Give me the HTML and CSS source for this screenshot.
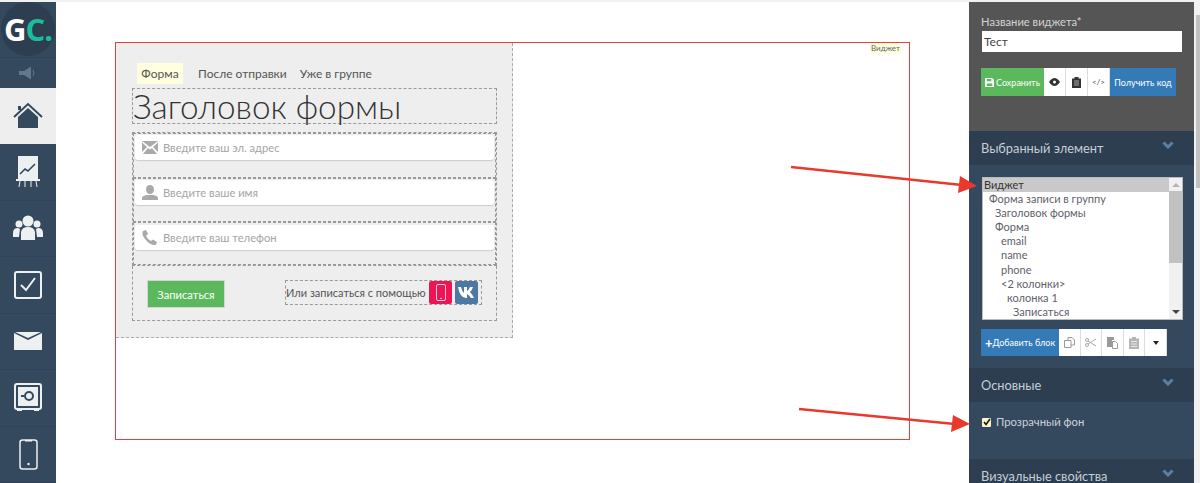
FILE: index.html
```html
<!DOCTYPE html>
<html lang="ru">
<head>
<meta charset="utf-8">
<title>Виджет</title>
<link rel="stylesheet" href="styles.css">
</head>
<body>
<div class="app">
  <nav class="nav">
    <div class="logo-row"><div class="logo"><span class="logo-g">G</span><span class="logo-c">C.</span></div></div>
    <div class="nav-speaker">
      <svg width="20" height="14" viewBox="0 0 20 14"><path d="M1 5h5l7-4.500v13L6 9H1z" fill="#62768c"/><path d="M15 4q2 3 0 6" stroke="#62768c" fill="none"/></svg>
    </div>
    <div class="nav-item nav-active">
      <svg width="30" height="28" viewBox="0 0 30 28"><path d="M1 15 15 2l14 13" fill="none" stroke="#34495e" stroke-width="2"/><path d="M5 15 15 6l10 9v11H5z" fill="#34495e"/><path d="M5 4h3v4H5z" fill="#34495e"/></svg>
    </div>
    <div class="nav-item">
      <svg width="24" height="33" viewBox="0 0 24 33"><path d="M2 1h20v23H2z" fill="#ecf0f1"/><path d="M4 19l5-5 3 2 7-7" stroke="#34495e" stroke-width="1.600" fill="none"/><path d="M0 24h24v2H0z" fill="#ecf0f1"/><path d="M4 26l-1 6M9 26v6M15 26v6M20 26l1 6" stroke="#ecf0f1"/></svg>
    </div>
    <div class="nav-item">
      <svg width="30" height="26" viewBox="0 0 30 26"><circle cx="15" cy="6" r="5.500" fill="#ecf0f1"/><circle cx="6" cy="9" r="3.500" fill="#ecf0f1"/><circle cx="24" cy="9" r="3.500" fill="#ecf0f1"/><path d="M8 25v-8q1-5 7-5t7 5v8z" fill="#ecf0f1"/><path d="M0 22v-4q0-5 5-5l2 1-1 8zM30 22v-4q0-5-5-5l-2 1 1 8z" fill="#ecf0f1"/></svg>
    </div>
    <div class="nav-item">
      <svg width="28" height="28" viewBox="0 0 28 28"><rect x="1" y="1" width="26" height="26" rx="2" fill="none" stroke="#ecf0f1" stroke-width="2"/><path d="M7 14l5 5 9-12" fill="none" stroke="#ecf0f1" stroke-width="2"/></svg>
    </div>
    <div class="nav-item">
      <svg width="28" height="18" viewBox="0 0 28 18"><path d="M0 1l14 7 14-7v17H0z" fill="#ecf0f1"/><path d="M1 0h26L14 6z" fill="#ecf0f1"/></svg>
    </div>
    <div class="nav-item">
      <svg width="28" height="29" viewBox="0 0 28 29"><rect x="1" y="1" width="26" height="25" rx="2" fill="none" stroke="#ecf0f1" stroke-width="2"/><rect x="4" y="4" width="20" height="19" fill="#ecf0f1"/><circle cx="15" cy="13" r="4" fill="none" stroke="#34495e" stroke-width="2"/><path d="M7 13h3" stroke="#34495e" stroke-width="2"/><path d="M3 26h5v2H3zM20 26h5v2h-5z" fill="#ecf0f1"/></svg>
    </div>
    <div class="nav-item">
      <svg width="19" height="31" viewBox="0 0 19 31"><rect x="1" y="1" width="17" height="29" rx="2.500" fill="none" stroke="#ecf0f1" stroke-width="1.500"/><path d="M6 1h7v1.500H6z" fill="#ecf0f1"/><circle cx="9.500" cy="25" r="1.200" fill="#ecf0f1"/></svg>
    </div>
  </nav>

  <main class="canvas">
    <section class="widget">
      <span class="widget-label">Виджет</span>
      <div class="form-card">
        <div class="tabs">
          <span class="tab tab-active">Форма</span>
          <span class="tab">После отправки</span>
          <span class="tab">Уже в группе</span>
        </div>
        <h1 class="form-title">Заголовок формы</h1>
        <div class="form-fields">
          <div class="field">
            <div class="input">
              <svg class="input-icon" width="16" height="13" viewBox="0 0 16 13"><path d="M0 0h16L8 6z" fill="#a9a9a9"/><path d="M0 1.500 5 6 0 11zM16 1.500 11 6l5 5zM1 13l5-6 2 1.500L10 7l5 6z" fill="#a9a9a9"/></svg>
              <span>Введите ваш эл. адрес</span>
            </div>
          </div>
          <div class="field">
            <div class="input">
              <svg class="input-icon" width="16" height="15" viewBox="0 0 16 15"><ellipse cx="8" cy="4.500" rx="4" ry="4.500" fill="#a9a9a9"/><path d="M0 15v-2q0-2 5-3h6q5 1 5 3v2z" fill="#a9a9a9"/></svg>
              <span>Введите ваше имя</span>
            </div>
          </div>
          <div class="field field-last">
            <div class="input">
              <svg class="input-icon" width="16" height="15" viewBox="0 0 16 15"><path d="M1 1l3-1 2 4-2 2q2 4 5 5l2-1.500 4 2.500-1 2.500q-1 1-3 .5Q5 13 1 6 0 3 1 1z" fill="#a9a9a9"/></svg>
              <span>Введите ваш телефон</span>
            </div>
          </div>
        </div>
        <div class="form-actions">
          <button class="submit" type="button">Записаться</button>
          <div class="social">
            <span>Или записаться с помощью</span>
            <span class="social-btn social-phone"><svg width="10" height="17" viewBox="0 0 10 17"><rect x=".5" y=".5" width="9" height="16" rx="1.500" fill="none" stroke="#fff" stroke-width=".8"/><circle cx="5" cy="14.500" r=".7" fill="#fff"/></svg></span>
            <span class="social-btn social-vk"><svg width="18" height="11" viewBox="0 0 18 11"><path d="M0 0h3q1 4 3 6V0h3v4q2-1 3-4h3q-1 3-3 5 2 2 4 6h-3q-2-3-4-4v4H8Q2 11 0 0z" fill="#fff"/></svg></span>
          </div>
        </div>
      </div>
    </section>
  </main>

  <aside class="panel">
    <div class="panel-top">
      <label class="name-label">Название виджета*</label>
      <div class="name-input">Тест</div>
      <div class="toolbar toolbar-top">
        <span class="tbtn tbtn-green">
          <svg width="9" height="9" viewBox="0 0 10 10"><path d="M0 0h8l2 2v8H0z" fill="#fff"/><path d="M2 1h5v2.500H2zM2 6h6v3H2z" fill="#5cb85c"/></svg>Сохранить</span>
        <span class="tbtn tbtn-white">
          <svg width="11" height="8" viewBox="0 0 11 8"><path d="M0 4q5.500-8 11 0-5.500 8-11 0z" fill="#333"/><circle cx="5.500" cy="4" r="1.500" fill="#fff"/></svg></span>
        <span class="tbtn tbtn-white">
          <svg width="9" height="11" viewBox="0 0 9 11"><path d="M0 1.500h2.500V0h4v1.500H9V11H0z" fill="#333"/><path d="M2 4h5M2 6h5M2 8h5" stroke="#fff" stroke-width=".6"/></svg></span>
        <span class="tbtn tbtn-white tbtn-code">&lt;/&gt;</span>
        <span class="tbtn tbtn-blue">Получить код</span>
      </div>
    </div>

    <div class="section-head"><span>Выбранный элемент</span><svg class="chev" width="12" height="8" viewBox="0 0 12 8"><path d="M1.500 1.500 6 6l4.500-4.500" fill="none" stroke="#5d7fa3" stroke-width="3"/></svg></div>
    <div class="section-body section-selected">
      <div class="tree">
        <ul class="tree-list">
          <li class="lv0 tree-selected">Виджет</li>
          <li class="lv1">Форма записи в группу</li>
          <li class="lv2">Заголовок формы</li>
          <li class="lv2">Форма</li>
          <li class="lv3">email</li>
          <li class="lv3">name</li>
          <li class="lv3">phone</li>
          <li class="lv3">&lt;2 колонки&gt;</li>
          <li class="lv4">колонка 1</li>
          <li class="lv5">Записаться</li>
        </ul>
        <div class="tree-scroll">
          <span class="arrow-up"></span>
          <div class="tree-track"><div class="tree-thumb"></div></div>
          <span class="arrow-down"></span>
        </div>
      </div>
      <div class="toolbar toolbar-tree">
        <span class="tbtn tbtn-blue tbtn-add"><b class="plus">+</b>Добавить блок</span>
        <span class="tbtn tbtn-white tbtn-m"><svg width="11" height="11" viewBox="0 0 11 11"><path d="M.5 3.500h6.500v7H.5zM4 3.500V.5h4l2.500 2.500v5H7" fill="none" stroke="#999"/></svg></span>
        <span class="tbtn tbtn-white tbtn-m"><svg width="12" height="9" viewBox="0 0 12 9"><circle cx="2" cy="2" r="1.500" fill="none" stroke="#aaa"/><circle cx="2" cy="7" r="1.500" fill="none" stroke="#aaa"/><path d="M3 3l8 5M3 6l8-5" stroke="#aaa"/></svg></span>
        <span class="tbtn tbtn-white tbtn-m"><svg width="11" height="12" viewBox="0 0 11 12"><path d="M0 0h7v3h-2v7H0z" fill="#999"/><path d="M5.500 4.500h3l2 2v5h-5z" fill="#fff" stroke="#999"/></svg></span>
        <span class="tbtn tbtn-white tbtn-m"><svg width="10" height="12" viewBox="0 0 10 12"><path d="M0 1.500h3V0h4v1.500h3V12H0z" fill="#b5b5b5"/><path d="M2 4.500h6M2 7h6M2 9.500h6" stroke="#fff" stroke-width=".7"/></svg></span>
        <span class="tbtn tbtn-white tbtn-m"><span class="caret"></span></span>
      </div>
    </div>

    <div class="section-head"><span>Основные</span><svg class="chev" width="12" height="8" viewBox="0 0 12 8"><path d="M1.500 1.500 6 6l4.500-4.500" fill="none" stroke="#5d7fa3" stroke-width="3"/></svg></div>
    <div class="section-body section-basic">
      <label class="check-row">
        <span class="check-box"><svg width="8" height="8" viewBox="0 0 8 8"><path d="M1 4l2 2.500L7 1" fill="none" stroke="#111" stroke-width="1.500"/></svg></span>
        <span>Прозрачный фон</span>
      </label>
    </div>

    <div class="section-head"><span>Визуальные свойства</span><svg class="chev" width="12" height="8" viewBox="0 0 12 8"><path d="M1.500 1.500 6 6l4.500-4.500" fill="none" stroke="#5d7fa3" stroke-width="3"/></svg></div>
  </aside>

  <div class="page-scroll">
    <span class="page-arrow"></span>
    <div class="page-thumb"></div>
  </div>
</div>

<svg class="arrows" width="1200" height="483" viewBox="0 0 1200 483">
  <path d="M791 167 962 185" stroke="#e8392c" stroke-width="2.500" fill="none"/>
  <path d="M977 186 958 193 960 176z" fill="#e8392c"/>
  <path d="M799 409 955 424" stroke="#e8392c" stroke-width="2.500" fill="none"/>
  <path d="M970 424 951 432 953 415z" fill="#e8392c"/>
</svg>
</body>
</html>
```

FILE: styles.css
```css
* { box-sizing: border-box; }
html, body { margin: 0; padding: 0; }
body {
  width: 1200px;
  height: 483px;
  overflow: hidden;
  position: relative;
  background: #fff;
  font-family: "Lato", "Open Sans", sans-serif;
  color: #444;
}
.app {
  display: flex;
  height: 483px;
  border-top: 2px solid #f1f1f1;
}

/* left nav */
.nav { width: 56px; flex: none; background: #34495e; display: flex; flex-direction: column; }
.logo-row { height: 56px; padding: 0 1px; border-bottom: 1px solid #2f4257; }
.logo {
  width: 54px; height: 54px; border-radius: 50%; background: #2c3e50;
  display: flex; align-items: center; justify-content: center;
  font: 700 31px/54px "Open Sans", sans-serif; letter-spacing: -1px;
}
.logo-g { color: #fff; }
.logo-c { color: #1abc9c; }
.nav-speaker { height: 30px; display: flex; align-items: center; justify-content: center; }
.nav-item {
  height: 56.500px; flex: none; display: flex; align-items: center; justify-content: center;
  border-bottom: 1px solid #2f4257;
}
.nav-active { background: #eee; border-bottom: 0; }

/* canvas */
.canvas { flex: 1; min-width: 0; padding: 40px 0 0 59px; }
.widget {
  position: relative; width: 795px; height: 398px;
  border: 1px solid #e8403a;
}
.widget-label {
  position: absolute; top: 0; right: 8px; width: 31px; height: 11px;
  background: #ffffe0; font-size: 8px; line-height: 10px; text-align: center; color: #666;
}
.form-card {
  width: 397px; height: 295px; background: #eee;
  border: 1px dashed #aaa; border-top: 0; border-left: 0;
  padding: 20px 0 0 16px;
}
.tabs { display: flex; height: 21px; margin-left: 5px; }
.tab { padding: 0 6.500px; font-size: 12px; line-height: 21px; color: #555; }
.tab-active { background: #ffffe0; width: 46px; padding: 0; margin-right: 8.500px; text-align: center; }
.form-title {
  margin: 4px 0 8px; height: 36px; width: 365px;
  border: 1px dashed #999;
  font-weight: 300; font-size: 33.300px; line-height: 34px; color: #333;
  white-space: nowrap;
}
.form-fields { width: 365px; height: 134px; border: 1px dashed #999; display: flex; flex-direction: column; }
.field { height: 44.500px; border: 1px dashed #999; padding: 1px; }
.field-last { flex: 1; padding-top: 2px; }
.input {
  height: 25px; background: #fff; border-radius: 3px; box-shadow: 0 1px 1px #ccc;
  display: flex; align-items: center; gap: 5px; padding-left: 7px;
  font-size: 11.200px; color: #a5a5a5;
}
.input-icon { flex: none; }
.form-actions {
  width: 365px; height: 55px; border: 1px dashed #999; border-top: 0;
  display: flex; justify-content: space-between; align-items: flex-start;
  padding: 14px 14px 0;
}
.submit {
  width: 78px; height: 28px; padding: 0; border: 1px solid #d5d5d5; background: #5cb85c; color: #fff;
  font: 11.200px "Lato", "Open Sans", sans-serif;
}
.social {
  width: 197px; height: 25px; border: 1px dashed #999; display: flex; align-items: center;
  font-size: 11px; color: #555; white-space: nowrap;
}
.social-btn { width: 23px; height: 23px; border-radius: 2px; display: flex; align-items: center; justify-content: center; flex: none; }
.social-phone { background: #ef1454; margin-left: auto; }
.social-vk { background: #4e77a3; margin: 0 3px; }

/* right panel */
.panel { width: 225px; flex: none; background: #34495e; color: #cfd6de; display: flex; flex-direction: column; font-size: 12px; overflow: hidden; }
.panel-top { height: 129px; flex: none; background: #555; padding: 12px 12px 0 12px; }
.name-label { display: block; height: 17px; font-size: 11.200px; line-height: 15px; color: #d4d4d4; }
.name-input {
  width: 200px; height: 21px; margin-left: 1px; background: #fff; color: #444;
  font-size: 12px; line-height: 21px; padding-left: 2px;
}
.toolbar { display: flex; }
.toolbar-top { margin-top: 16px; height: 28px; }
.tbtn { display: flex; align-items: center; justify-content: center; white-space: nowrap; font-size: 9px; height: 100%; }
.tbtn svg { flex: none; }
.tbtn-green { width: 63px; background: #5cb85c; color: #fff; gap: 2px; }
.tbtn-white { width: 22px; background: #fff; border-right: 1px solid #ddd; color: #444; }
.tbtn-blue { width: 66px; background: #337ab7; color: #fff; }
.tbtn-code { font-size: 8px; }
.section-head {
  height: 34px; flex: none; background: #2c3e50; display: flex; justify-content: space-between; align-items: center;
  padding: 0 20px 0 12px; font-size: 12.800px; color: #c6ced7;
}
.chev { margin-top: -6px; }
.section-body { flex: none; }
.section-selected { height: 203px; padding: 12px 0 0 12px; }
.tree {
  width: 201px; height: 143px; margin-left: 1px; background: #fff; border: 1px solid #bbb;
  display: flex; justify-content: space-between;
}
.tree-list { flex: 1; margin: 0; padding: 0; list-style: none; font-size: 11px; line-height: 14.100px; color: #5f5f6a; }
.lv0 { padding-left: 1px; }
.lv1 { padding-left: 6px; }
.lv2 { padding-left: 12px; }
.lv3 { padding-left: 18px; }
.lv4 { padding-left: 24px; }
.lv5 { padding-left: 30px; }
.tree-selected { background: #c9c9c9; color: #333; }
.tree-scroll { width: 13px; flex: none; background: #f1f1f1; display: flex; flex-direction: column; align-items: center; }
.arrow-up { margin: 5px 0 4px; border: 4px solid transparent; border-top: 0; border-bottom-color: #b5b5b5; }
.tree-track { flex: 1; width: 100%; }
.tree-thumb { height: 72px; background: #c1c1c1; }
.arrow-down { margin: 4px 0 5px; border: 4px solid transparent; border-bottom: 0; border-top-color: #444; }
.toolbar-tree { margin-top: 9px; height: 27px; }
.tbtn-add { width: 78px; }
.plus { font-size: 13px; line-height: 10px; }
.tbtn-m { width: 21.600px; }
.caret { border: 3.500px solid transparent; border-bottom: 0; border-top: 4px solid #222; }
.section-basic { height: 57px; padding: 14px 0 0 13px; }
.check-row { display: flex; align-items: center; gap: 5px; font-size: 11.300px; line-height: 12px; color: #ccd3db; }
.check-box { width: 9px; height: 9px; background: #fdf3c7; display: flex; align-items: center; justify-content: center; border-radius: 1px; }

/* page scrollbar */
.page-scroll { width: 6px; flex: none; background: #f1f1f1; display: flex; flex-direction: column; align-items: flex-end; }
.page-arrow { height: 13px; }
.page-thumb { width: 4px; height: 173px; background: #c1c1c1; }

/* annotation arrows */
.arrows { position: absolute; left: 0; top: 0; pointer-events: none; }
```
